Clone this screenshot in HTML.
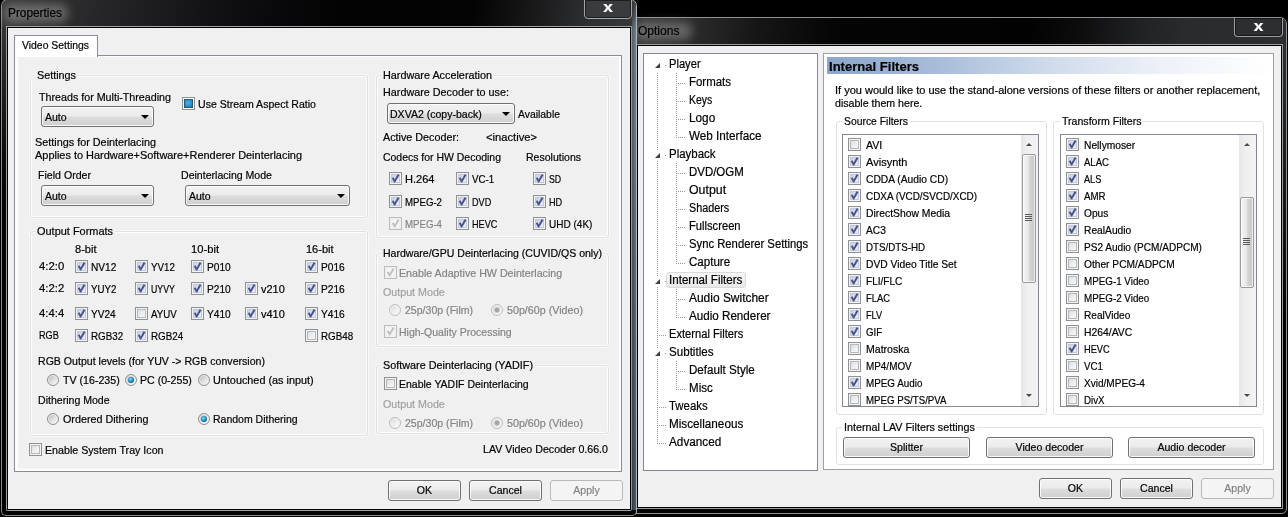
<!DOCTYPE html>
<html lang="en"><head><meta charset="utf-8"><title>Properties / Options</title>
<style>
html,body{margin:0;padding:0;background:#000;}
body{width:1288px;height:517px;overflow:hidden;font-family:"Liberation Sans",sans-serif;}
#root{position:relative;width:1288px;height:517px;overflow:hidden;background:#000;}
#root div{position:absolute;box-sizing:content-box;}
.t{font-size:11px;line-height:13px;white-space:pre;color:#000;transform-origin:0 50%;-webkit-text-stroke:0.2px currentColor;}
.bt{text-align:center;transform-origin:50% 50%;}
.gray{color:#838383;}
/* window frames */
.win{border-radius:7px 7px 2px 2px;}
.client{background:#f0f0f0;}
/* group box */
.grp{border:1px solid #dfe1e3;border-radius:3px;box-shadow:inset 0 0 0 1px rgba(255,255,255,.85), 0 0 0 1px rgba(255,255,255,.55);}
.glbg{}
/* button + combobox */
.btn{box-sizing:border-box !important;border:1px solid #707070;border-radius:3px;
 background:linear-gradient(#f2f2f2 0%,#ebebeb 48%,#dddddd 52%,#cfcfcf 100%);
 box-shadow:inset 0 0 0 1px rgba(255,255,255,.85);}
.btn.dis{border-color:#b6babd;background:#f4f4f4;box-shadow:none;}
.arr{width:0;height:0;border-left:4px solid transparent;border-right:4px solid transparent;border-top:4px solid #000;}
/* checkbox */
.cb{width:11px;height:11px;border:1px solid #909191;background:linear-gradient(135deg,#d0d4d9 0%,#eef0f2 55%,#fafbfb 100%);box-shadow:inset 0 0 0 1px #f4f4f4, inset 0 0 0 2px #b4b8bd;}
.cb.on{background:linear-gradient(135deg,#bfc5da 0%,#dde1f0 50%,#f3f4fb 100%);box-shadow:inset 0 0 0 1px #f1f2f6, inset 0 0 0 2px #c3c8da;}
.cb.dis{border-color:#bcbcbc;background:#f6f6f6;box-shadow:inset 0 0 0 2px #f0f0f0;}
.cb svg{position:absolute;left:-1px;top:-1px;}
.cb.sq{background:#fff;box-shadow:none;}
/* radio */
.rb{width:10px;height:10px;border:1px solid #8e8f8f;border-radius:50%;background:linear-gradient(135deg,#bcbfc3 15%,#e0e2e4 55%,#f8f8f8 90%);box-shadow:inset 0 0 0 1px #f1f1f1;}
.rb.on::after{content:"";position:absolute;left:2px;top:2px;width:6px;height:6px;border-radius:50%;background:radial-gradient(circle at 42% 38%,#86e2fb 0%,#2da3d3 35%,#185680 72%,#123e5e 100%);}
.rb.dis{border-color:#bdbdbd;background:linear-gradient(135deg,#dedede 15%,#efefef 55%,#f8f8f8 90%);box-shadow:inset 0 0 0 1px #f3f3f3;}
.rb.dis.on::after{left:3px;top:3px;width:4px;height:4px;background:#a2a2a2;box-shadow:0 0 0 1px #c6c6c6;}

</style></head>
<body>
<div id="root">
<div style="left:628px;top:17px;width:657px;height:495px;background:linear-gradient(180deg,#2e2f31 0px,#2e2f31 30px,#222324 100px,#0c0c0d 240px,#030303 300px);border:1px solid #8e9092;border-radius:7px 7px 5px 5px;"></div>
<div style="left:637px;top:18px;width:649px;height:26px;background:linear-gradient(95deg,#3a3a3b 0px,#2a2a2b 60px,#161617 120px,#050506 200px,#020202 390px,#0c0c0d 440px,#202123 500px,#2a2b2d 550px,#2d2e30 650px);border-radius:0 6px 0 0;"></div>
<div style="left:636px;top:22px;width:56px;height:18px;background:rgba(255,255,255,.26);filter:blur(5px);border-radius:8px;"></div>
<div style="left:1234px;top:18px;width:47px;height:18px;border:1px solid #9c9ea0;border-top:none;border-radius:0 0 4px 4px;background:#2d2e30;box-shadow:inset 0 0 0 1px #151516;"></div>
<div class="t" style="left:1234px;top:17px;width:49px;text-align:center;color:#fff;font-weight:bold;font-size:15px;line-height:17px;transform:scaleX(1.15);transform-origin:50% 50%;">x</div>
<div class="t" style="left:638px;top:24.0px;font-size:12px;line-height:14px;color:#000;transform:scaleX(1.0010);">Options</div>
<div style="left:636px;top:44px;width:645px;height:463px;border:1px solid #9a9b9d;background:#000;"></div>
<div class="client" style="left:638px;top:46px;width:643px;height:461px;"></div>
<div style="left:643px;top:53px;width:173px;height:416px;background:#fff;border:1px solid #828790;"></div>
<div style="left:657px;top:73px;width:1px;height:371px;background:repeating-linear-gradient(180deg,#9a9a9a 0,#9a9a9a 1px,transparent 1px,transparent 2px);"></div>
<div style="left:654px;top:61px;width:8px;height:9px;background:#fff;"></div>
<div style="left:655px;top:63px;width:0;height:0;border-left:5px solid transparent;border-bottom:5px solid #404040;"></div>
<div style="left:665px;top:65px;width:2px;height:1px;background:repeating-linear-gradient(90deg,#9a9a9a 0,#9a9a9a 1px,transparent 1px,transparent 2px);"></div>
<div class="t" style="left:669.4px;top:57.0px;font-size:12px;line-height:14px;transform:scaleX(0.9290);">Player</div>
<div style="left:676px;top:83px;width:10px;height:1px;background:repeating-linear-gradient(90deg,#9a9a9a 0,#9a9a9a 1px,transparent 1px,transparent 2px);"></div>
<div class="t" style="left:688.7px;top:75.0px;font-size:12px;line-height:14px;transform:scaleX(0.9542);">Formats</div>
<div style="left:676px;top:101px;width:10px;height:1px;background:repeating-linear-gradient(90deg,#9a9a9a 0,#9a9a9a 1px,transparent 1px,transparent 2px);"></div>
<div class="t" style="left:688.7px;top:93.0px;font-size:12px;line-height:14px;transform:scaleX(0.8693);">Keys</div>
<div style="left:676px;top:119px;width:10px;height:1px;background:repeating-linear-gradient(90deg,#9a9a9a 0,#9a9a9a 1px,transparent 1px,transparent 2px);"></div>
<div class="t" style="left:688.7px;top:111.0px;font-size:12px;line-height:14px;transform:scaleX(0.9812);">Logo</div>
<div style="left:676px;top:137px;width:10px;height:1px;background:repeating-linear-gradient(90deg,#9a9a9a 0,#9a9a9a 1px,transparent 1px,transparent 2px);"></div>
<div class="t" style="left:688.7px;top:129.0px;font-size:12px;line-height:14px;transform:scaleX(0.9747);">Web Interface</div>
<div style="left:654px;top:151px;width:8px;height:9px;background:#fff;"></div>
<div style="left:655px;top:153px;width:0;height:0;border-left:5px solid transparent;border-bottom:5px solid #404040;"></div>
<div style="left:665px;top:155px;width:2px;height:1px;background:repeating-linear-gradient(90deg,#9a9a9a 0,#9a9a9a 1px,transparent 1px,transparent 2px);"></div>
<div class="t" style="left:669.4px;top:147.0px;font-size:12px;line-height:14px;transform:scaleX(0.9548);">Playback</div>
<div style="left:676px;top:173px;width:10px;height:1px;background:repeating-linear-gradient(90deg,#9a9a9a 0,#9a9a9a 1px,transparent 1px,transparent 2px);"></div>
<div class="t" style="left:688.7px;top:165.0px;font-size:12px;line-height:14px;transform:scaleX(0.9539);">DVD/OGM</div>
<div style="left:676px;top:191px;width:10px;height:1px;background:repeating-linear-gradient(90deg,#9a9a9a 0,#9a9a9a 1px,transparent 1px,transparent 2px);"></div>
<div class="t" style="left:688.7px;top:183.0px;font-size:12px;line-height:14px;transform:scaleX(1.0297);">Output</div>
<div style="left:676px;top:209px;width:10px;height:1px;background:repeating-linear-gradient(90deg,#9a9a9a 0,#9a9a9a 1px,transparent 1px,transparent 2px);"></div>
<div class="t" style="left:688.7px;top:201.0px;font-size:12px;line-height:14px;transform:scaleX(0.8993);">Shaders</div>
<div style="left:676px;top:227px;width:10px;height:1px;background:repeating-linear-gradient(90deg,#9a9a9a 0,#9a9a9a 1px,transparent 1px,transparent 2px);"></div>
<div class="t" style="left:688.7px;top:219.0px;font-size:12px;line-height:14px;transform:scaleX(0.9321);">Fullscreen</div>
<div style="left:676px;top:245px;width:10px;height:1px;background:repeating-linear-gradient(90deg,#9a9a9a 0,#9a9a9a 1px,transparent 1px,transparent 2px);"></div>
<div class="t" style="left:688.7px;top:237.0px;font-size:12px;line-height:14px;transform:scaleX(0.9398);">Sync Renderer Settings</div>
<div style="left:676px;top:263px;width:10px;height:1px;background:repeating-linear-gradient(90deg,#9a9a9a 0,#9a9a9a 1px,transparent 1px,transparent 2px);"></div>
<div class="t" style="left:688.7px;top:255.0px;font-size:12px;line-height:14px;transform:scaleX(0.9625);">Capture</div>
<div style="left:666px;top:272px;width:78px;height:14px;background:linear-gradient(#f8f8f8,#e8e8e8);border:1px solid #d9d9d9;border-radius:3px;"></div>
<div style="left:654px;top:277px;width:8px;height:9px;background:#fff;"></div>
<div style="left:655px;top:279px;width:0;height:0;border-left:5px solid transparent;border-bottom:5px solid #404040;"></div>
<div style="left:665px;top:281px;width:2px;height:1px;background:repeating-linear-gradient(90deg,#9a9a9a 0,#9a9a9a 1px,transparent 1px,transparent 2px);"></div>
<div class="t" style="left:669.4px;top:273.0px;font-size:12px;line-height:14px;transform:scaleX(0.9654);">Internal Filters</div>
<div style="left:676px;top:299px;width:10px;height:1px;background:repeating-linear-gradient(90deg,#9a9a9a 0,#9a9a9a 1px,transparent 1px,transparent 2px);"></div>
<div class="t" style="left:688.7px;top:291.0px;font-size:12px;line-height:14px;transform:scaleX(0.9957);">Audio Switcher</div>
<div style="left:676px;top:317px;width:10px;height:1px;background:repeating-linear-gradient(90deg,#9a9a9a 0,#9a9a9a 1px,transparent 1px,transparent 2px);"></div>
<div class="t" style="left:688.7px;top:309.0px;font-size:12px;line-height:14px;transform:scaleX(0.9695);">Audio Renderer</div>
<div style="left:657px;top:335px;width:10px;height:1px;background:repeating-linear-gradient(90deg,#9a9a9a 0,#9a9a9a 1px,transparent 1px,transparent 2px);"></div>
<div class="t" style="left:669.4px;top:327.0px;font-size:12px;line-height:14px;transform:scaleX(0.9284);">External Filters</div>
<div style="left:654px;top:349px;width:8px;height:9px;background:#fff;"></div>
<div style="left:655px;top:351px;width:0;height:0;border-left:5px solid transparent;border-bottom:5px solid #404040;"></div>
<div style="left:665px;top:353px;width:2px;height:1px;background:repeating-linear-gradient(90deg,#9a9a9a 0,#9a9a9a 1px,transparent 1px,transparent 2px);"></div>
<div class="t" style="left:669.4px;top:345.0px;font-size:12px;line-height:14px;transform:scaleX(0.9667);">Subtitles</div>
<div style="left:676px;top:371px;width:10px;height:1px;background:repeating-linear-gradient(90deg,#9a9a9a 0,#9a9a9a 1px,transparent 1px,transparent 2px);"></div>
<div class="t" style="left:688.7px;top:363.0px;font-size:12px;line-height:14px;transform:scaleX(0.9655);">Default Style</div>
<div style="left:676px;top:389px;width:10px;height:1px;background:repeating-linear-gradient(90deg,#9a9a9a 0,#9a9a9a 1px,transparent 1px,transparent 2px);"></div>
<div class="t" style="left:688.7px;top:381.0px;font-size:12px;line-height:14px;transform:scaleX(0.9647);">Misc</div>
<div style="left:657px;top:407px;width:10px;height:1px;background:repeating-linear-gradient(90deg,#9a9a9a 0,#9a9a9a 1px,transparent 1px,transparent 2px);"></div>
<div class="t" style="left:669.4px;top:399.0px;font-size:12px;line-height:14px;transform:scaleX(0.9487);">Tweaks</div>
<div style="left:657px;top:425px;width:10px;height:1px;background:repeating-linear-gradient(90deg,#9a9a9a 0,#9a9a9a 1px,transparent 1px,transparent 2px);"></div>
<div class="t" style="left:669.4px;top:417.0px;font-size:12px;line-height:14px;transform:scaleX(0.9770);">Miscellaneous</div>
<div style="left:657px;top:443px;width:10px;height:1px;background:repeating-linear-gradient(90deg,#9a9a9a 0,#9a9a9a 1px,transparent 1px,transparent 2px);"></div>
<div class="t" style="left:669.4px;top:435.0px;font-size:12px;line-height:14px;transform:scaleX(0.9799);">Advanced</div>
<div style="left:676px;top:73px;width:1px;height:65px;background:repeating-linear-gradient(180deg,#9a9a9a 0,#9a9a9a 1px,transparent 1px,transparent 2px);"></div>
<div style="left:676px;top:163px;width:1px;height:101px;background:repeating-linear-gradient(180deg,#9a9a9a 0,#9a9a9a 1px,transparent 1px,transparent 2px);"></div>
<div style="left:676px;top:289px;width:1px;height:29px;background:repeating-linear-gradient(180deg,#9a9a9a 0,#9a9a9a 1px,transparent 1px,transparent 2px);"></div>
<div style="left:676px;top:361px;width:1px;height:29px;background:repeating-linear-gradient(180deg,#9a9a9a 0,#9a9a9a 1px,transparent 1px,transparent 2px);"></div>
<div style="left:823px;top:53px;width:449px;height:415px;background:#fff;border:1px solid #a0a0a0;"></div>
<div style="left:827px;top:57px;width:445px;height:17px;background:linear-gradient(90deg,#8aa6ca 0%,#a8bdda 25%,#cfdbeb 50%,#edf1f8 75%,#fff 100%);"></div>
<div class="t" style="left:829px;top:58.5px;font-size:13px;line-height:15px;font-weight:bold;transform:scaleX(1.0047);">Internal Filters</div>
<div class="t" style="left:834.7px;top:83.5px;transform:scaleX(0.9993);">If you would like to use the stand-alone versions of these filters or another replacement,</div>
<div class="t" style="left:834.7px;top:96.5px;transform:scaleX(0.9646);">disable them here.</div>
<div class="grp" style="left:836px;top:121px;width:209px;height:292px"></div>
<div class="glbg" style="left:842px;top:115px;width:68px;height:13px;background:#fff"></div>
<div class="t gl" style="left:844px;top:114.5px;transform:scaleX(0.9431);">Source Filters</div>
<div class="grp" style="left:1053px;top:121px;width:209px;height:292px"></div>
<div class="glbg" style="left:1059.5px;top:115px;width:83.5px;height:13px;background:#fff"></div>
<div class="t gl" style="left:1061.5px;top:114.5px;transform:scaleX(0.9611);">Transform Filters</div>
<div class="grp" style="left:836px;top:427px;width:426px;height:36px"></div>
<div class="glbg" style="left:842px;top:421px;width:135px;height:13px;background:#fff"></div>
<div class="t gl" style="left:844px;top:420.5px;transform:scaleX(0.9799);">Internal LAV Filters settings</div>
<div style="left:842px;top:134px;width:195px;height:271px;background:#fff;border:1px solid #828790;overflow:hidden;">
<div class="cb" style="left:5px;top:3px"></div>
<div class="t" style="left:22.7px;top:4.0px;transform:scaleX(0.9633);">AVI</div>
<div class="cb on" style="left:5px;top:20px"><svg width="13" height="13" viewBox="0 0 13 13"><path d="M2.8 6.3 L4.5 5.3 L5.7 7.4 L8.5 2.2 L10.5 2.9 L6.1 10.5 L5.1 10.5 Z" fill="#47548a"/></svg></div>
<div class="t" style="left:22.7px;top:21.0px;transform:scaleX(1.0030);">Avisynth</div>
<div class="cb on" style="left:5px;top:37px"><svg width="13" height="13" viewBox="0 0 13 13"><path d="M2.8 6.3 L4.5 5.3 L5.7 7.4 L8.5 2.2 L10.5 2.9 L6.1 10.5 L5.1 10.5 Z" fill="#47548a"/></svg></div>
<div class="t" style="left:22.7px;top:38.0px;transform:scaleX(0.9326);">CDDA (Audio CD)</div>
<div class="cb on" style="left:5px;top:54px"><svg width="13" height="13" viewBox="0 0 13 13"><path d="M2.8 6.3 L4.5 5.3 L5.7 7.4 L8.5 2.2 L10.5 2.9 L6.1 10.5 L5.1 10.5 Z" fill="#47548a"/></svg></div>
<div class="t" style="left:22.7px;top:55.0px;transform:scaleX(0.8990);">CDXA (VCD/SVCD/XCD)</div>
<div class="cb on" style="left:5px;top:71px"><svg width="13" height="13" viewBox="0 0 13 13"><path d="M2.8 6.3 L4.5 5.3 L5.7 7.4 L8.5 2.2 L10.5 2.9 L6.1 10.5 L5.1 10.5 Z" fill="#47548a"/></svg></div>
<div class="t" style="left:22.7px;top:72.0px;transform:scaleX(0.9410);">DirectShow Media</div>
<div class="cb on" style="left:5px;top:88px"><svg width="13" height="13" viewBox="0 0 13 13"><path d="M2.8 6.3 L4.5 5.3 L5.7 7.4 L8.5 2.2 L10.5 2.9 L6.1 10.5 L5.1 10.5 Z" fill="#47548a"/></svg></div>
<div class="t" style="left:22.7px;top:89.0px;transform:scaleX(0.9250);">AC3</div>
<div class="cb on" style="left:5px;top:105px"><svg width="13" height="13" viewBox="0 0 13 13"><path d="M2.8 6.3 L4.5 5.3 L5.7 7.4 L8.5 2.2 L10.5 2.9 L6.1 10.5 L5.1 10.5 Z" fill="#47548a"/></svg></div>
<div class="t" style="left:22.7px;top:106.0px;transform:scaleX(0.8873);">DTS/DTS-HD</div>
<div class="cb on" style="left:5px;top:122px"><svg width="13" height="13" viewBox="0 0 13 13"><path d="M2.8 6.3 L4.5 5.3 L5.7 7.4 L8.5 2.2 L10.5 2.9 L6.1 10.5 L5.1 10.5 Z" fill="#47548a"/></svg></div>
<div class="t" style="left:22.7px;top:123.0px;transform:scaleX(0.9349);">DVD Video Title Set</div>
<div class="cb on" style="left:5px;top:139px"><svg width="13" height="13" viewBox="0 0 13 13"><path d="M2.8 6.3 L4.5 5.3 L5.7 7.4 L8.5 2.2 L10.5 2.9 L6.1 10.5 L5.1 10.5 Z" fill="#47548a"/></svg></div>
<div class="t" style="left:22.7px;top:140.0px;transform:scaleX(0.9161);">FLI/FLC</div>
<div class="cb on" style="left:5px;top:156px"><svg width="13" height="13" viewBox="0 0 13 13"><path d="M2.8 6.3 L4.5 5.3 L5.7 7.4 L8.5 2.2 L10.5 2.9 L6.1 10.5 L5.1 10.5 Z" fill="#47548a"/></svg></div>
<div class="t" style="left:22.7px;top:157.0px;transform:scaleX(0.8604);">FLAC</div>
<div class="cb on" style="left:5px;top:173px"><svg width="13" height="13" viewBox="0 0 13 13"><path d="M2.8 6.3 L4.5 5.3 L5.7 7.4 L8.5 2.2 L10.5 2.9 L6.1 10.5 L5.1 10.5 Z" fill="#47548a"/></svg></div>
<div class="t" style="left:22.7px;top:174.0px;transform:scaleX(0.8316);">FLV</div>
<div class="cb on" style="left:5px;top:190px"><svg width="13" height="13" viewBox="0 0 13 13"><path d="M2.8 6.3 L4.5 5.3 L5.7 7.4 L8.5 2.2 L10.5 2.9 L6.1 10.5 L5.1 10.5 Z" fill="#47548a"/></svg></div>
<div class="t" style="left:22.7px;top:191.0px;transform:scaleX(0.8777);">GIF</div>
<div class="cb" style="left:5px;top:207px"></div>
<div class="t" style="left:22.7px;top:208.0px;transform:scaleX(0.9591);">Matroska</div>
<div class="cb" style="left:5px;top:224px"></div>
<div class="t" style="left:22.7px;top:225.0px;transform:scaleX(0.9008);">MP4/MOV</div>
<div class="cb on" style="left:5px;top:241px"><svg width="13" height="13" viewBox="0 0 13 13"><path d="M2.8 6.3 L4.5 5.3 L5.7 7.4 L8.5 2.2 L10.5 2.9 L6.1 10.5 L5.1 10.5 Z" fill="#47548a"/></svg></div>
<div class="t" style="left:22.7px;top:242.0px;transform:scaleX(0.8955);">MPEG Audio</div>
<div class="cb" style="left:5px;top:258px"></div>
<div class="t" style="left:22.7px;top:259.0px;transform:scaleX(0.8798);">MPEG PS/TS/PVA</div>
</div>
<div style="left:1021px;top:135px;width:17px;height:271px;background:linear-gradient(90deg,#e6e6e6,#f0f0f0 40%,#f3f3f3);"></div>
<div style="left:1026px;top:143px;width:0;height:0;border-left:3.5px solid transparent;border-right:3.5px solid transparent;border-bottom:3.5px solid #4a4a4a;"></div>
<div style="left:1026px;top:394px;width:0;height:0;border-left:3.5px solid transparent;border-right:3.5px solid transparent;border-top:3.5px solid #4a4a4a;"></div>
<div style="left:1022px;top:154px;width:12px;height:127px;border:1px solid #9a9a9a;border-radius:2px;background:linear-gradient(90deg,#f5f5f5 0%,#e8e8e8 45%,#d6d6d6 55%,#c6c6c6 100%);box-shadow:inset 0 0 0 1px rgba(255,255,255,.7);"></div>
<div style="left:1025px;top:214px;width:7px;height:1px;background:#5a5a5a;"></div>
<div style="left:1025px;top:216px;width:7px;height:1px;background:#5a5a5a;"></div>
<div style="left:1025px;top:218px;width:7px;height:1px;background:#5a5a5a;"></div>
<div style="left:1025px;top:220px;width:7px;height:1px;background:#5a5a5a;"></div>
<div style="left:1060px;top:134px;width:195px;height:271px;background:#fff;border:1px solid #828790;overflow:hidden;">
<div class="cb on" style="left:5px;top:3px"><svg width="13" height="13" viewBox="0 0 13 13"><path d="M2.8 6.3 L4.5 5.3 L5.7 7.4 L8.5 2.2 L10.5 2.9 L6.1 10.5 L5.1 10.5 Z" fill="#47548a"/></svg></div>
<div class="t" style="left:22.7px;top:4.0px;transform:scaleX(0.9306);">Nellymoser</div>
<div class="cb on" style="left:5px;top:20px"><svg width="13" height="13" viewBox="0 0 13 13"><path d="M2.8 6.3 L4.5 5.3 L5.7 7.4 L8.5 2.2 L10.5 2.9 L6.1 10.5 L5.1 10.5 Z" fill="#47548a"/></svg></div>
<div class="t" style="left:22.7px;top:21.0px;transform:scaleX(0.8661);">ALAC</div>
<div class="cb on" style="left:5px;top:37px"><svg width="13" height="13" viewBox="0 0 13 13"><path d="M2.8 6.3 L4.5 5.3 L5.7 7.4 L8.5 2.2 L10.5 2.9 L6.1 10.5 L5.1 10.5 Z" fill="#47548a"/></svg></div>
<div class="t" style="left:22.7px;top:38.0px;transform:scaleX(0.8319);">ALS</div>
<div class="cb on" style="left:5px;top:54px"><svg width="13" height="13" viewBox="0 0 13 13"><path d="M2.8 6.3 L4.5 5.3 L5.7 7.4 L8.5 2.2 L10.5 2.9 L6.1 10.5 L5.1 10.5 Z" fill="#47548a"/></svg></div>
<div class="t" style="left:22.7px;top:55.0px;transform:scaleX(0.8833);">AMR</div>
<div class="cb on" style="left:5px;top:71px"><svg width="13" height="13" viewBox="0 0 13 13"><path d="M2.8 6.3 L4.5 5.3 L5.7 7.4 L8.5 2.2 L10.5 2.9 L6.1 10.5 L5.1 10.5 Z" fill="#47548a"/></svg></div>
<div class="t" style="left:22.7px;top:72.0px;transform:scaleX(0.9241);">Opus</div>
<div class="cb on" style="left:5px;top:88px"><svg width="13" height="13" viewBox="0 0 13 13"><path d="M2.8 6.3 L4.5 5.3 L5.7 7.4 L8.5 2.2 L10.5 2.9 L6.1 10.5 L5.1 10.5 Z" fill="#47548a"/></svg></div>
<div class="t" style="left:22.7px;top:89.0px;transform:scaleX(0.9317);">RealAudio</div>
<div class="cb" style="left:5px;top:105px"></div>
<div class="t" style="left:22.7px;top:106.0px;transform:scaleX(0.9141);">PS2 Audio (PCM/ADPCM)</div>
<div class="cb" style="left:5px;top:122px"></div>
<div class="t" style="left:22.7px;top:123.0px;transform:scaleX(0.9274);">Other PCM/ADPCM</div>
<div class="cb" style="left:5px;top:139px"></div>
<div class="t" style="left:22.7px;top:140.0px;transform:scaleX(0.8924);">MPEG-1 Video</div>
<div class="cb" style="left:5px;top:156px"></div>
<div class="t" style="left:22.7px;top:157.0px;transform:scaleX(0.8924);">MPEG-2 Video</div>
<div class="cb" style="left:5px;top:173px"></div>
<div class="t" style="left:22.7px;top:174.0px;transform:scaleX(0.9157);">RealVideo</div>
<div class="cb" style="left:5px;top:190px"></div>
<div class="t" style="left:22.7px;top:191.0px;transform:scaleX(0.9422);">H264/AVC</div>
<div class="cb on" style="left:5px;top:207px"><svg width="13" height="13" viewBox="0 0 13 13"><path d="M2.8 6.3 L4.5 5.3 L5.7 7.4 L8.5 2.2 L10.5 2.9 L6.1 10.5 L5.1 10.5 Z" fill="#47548a"/></svg></div>
<div class="t" style="left:22.7px;top:208.0px;transform:scaleX(0.8409);">HEVC</div>
<div class="cb" style="left:5px;top:224px"></div>
<div class="t" style="left:22.7px;top:225.0px;transform:scaleX(0.8829);">VC1</div>
<div class="cb" style="left:5px;top:241px"></div>
<div class="t" style="left:22.7px;top:242.0px;transform:scaleX(0.9139);">Xvid/MPEG-4</div>
<div class="cb" style="left:5px;top:258px"></div>
<div class="t" style="left:22.7px;top:259.0px;transform:scaleX(0.8866);">DivX</div>
</div>
<div style="left:1239px;top:135px;width:17px;height:271px;background:linear-gradient(90deg,#e6e6e6,#f0f0f0 40%,#f3f3f3);"></div>
<div style="left:1244px;top:143px;width:0;height:0;border-left:3.5px solid transparent;border-right:3.5px solid transparent;border-bottom:3.5px solid #4a4a4a;"></div>
<div style="left:1244px;top:394px;width:0;height:0;border-left:3.5px solid transparent;border-right:3.5px solid transparent;border-top:3.5px solid #4a4a4a;"></div>
<div style="left:1240px;top:197px;width:12px;height:89px;border:1px solid #9a9a9a;border-radius:2px;background:linear-gradient(90deg,#f5f5f5 0%,#e8e8e8 45%,#d6d6d6 55%,#c6c6c6 100%);box-shadow:inset 0 0 0 1px rgba(255,255,255,.7);"></div>
<div style="left:1243px;top:238px;width:7px;height:1px;background:#5a5a5a;"></div>
<div style="left:1243px;top:240px;width:7px;height:1px;background:#5a5a5a;"></div>
<div style="left:1243px;top:242px;width:7px;height:1px;background:#5a5a5a;"></div>
<div style="left:1243px;top:244px;width:7px;height:1px;background:#5a5a5a;"></div>
<div class="btn" style="left:843px;top:437px;width:127px;height:21px"></div>
<div class="t bt" style="left:843px;top:441.0px;width:127px;transform:scaleX(0.96);">Splitter</div>
<div class="btn" style="left:986px;top:437px;width:127px;height:21px"></div>
<div class="t bt" style="left:986px;top:441.0px;width:127px;transform:scaleX(0.96);">Video decoder</div>
<div class="btn" style="left:1128px;top:437px;width:127px;height:21px"></div>
<div class="t bt" style="left:1128px;top:441.0px;width:127px;transform:scaleX(0.96);">Audio decoder</div>
<div class="btn" style="left:1039px;top:478px;width:73px;height:21px"></div>
<div class="t bt" style="left:1039px;top:482.0px;width:73px;transform:scaleX(0.96);">OK</div>
<div class="btn" style="left:1120px;top:478px;width:73px;height:21px"></div>
<div class="t bt" style="left:1120px;top:482.0px;width:73px;transform:scaleX(0.96);">Cancel</div>
<div class="btn dis" style="left:1201px;top:478px;width:73px;height:21px"></div>
<div class="t bt" style="left:1201px;top:482.0px;width:73px;transform:scaleX(0.96);color:#838383;">Apply</div>
<div style="left:0px;top:-1px;width:637px;height:517px;background:#000;border-radius:8px 8px 6px 6px;"></div>
<div style="left:1px;top:-1px;width:634px;height:515px;background:linear-gradient(180deg,#38383a 0px,#343435 32px,#1f1f20 90px,#0c0c0d 150px,#040404 210px);border:1px solid #8a8b8c;border-right-color:#aab6be;border-radius:7px 7px 5px 5px;"></div>
<div style="left:2px;top:0px;width:634px;height:27px;background:linear-gradient(97deg,#3b3b3c 0px,#303031 50px,#262628 100px,#1b1b1d 160px,#111113 215px,#08080a 280px,#030304 340px,#040405 470px,#19191a 530px,#2b2c2e 575px,#393a3c 634px);border-radius:6px 6px 0 0;"></div>
<div style="left:4px;top:4px;width:64px;height:18px;background:rgba(255,255,255,.28);filter:blur(5px);border-radius:8px;"></div>
<div style="left:632px;top:3px;width:4px;height:507px;background:linear-gradient(90deg,rgba(0,0,0,.18),rgba(255,255,255,.10)),linear-gradient(180deg,#3a3b3d 0px,#42464a 10px,#65727b 26px,#62707a 120px,#4c5963 300px,#3d4954 507px);"></div>
<div style="left:584px;top:-1px;width:46px;height:18px;border:1px solid #a4a6a8;border-radius:0 0 4px 4px;background:#3a3b3d;box-shadow:inset 0 0 0 1px #1d1d1e;"></div>
<div class="t" style="left:584px;top:-2px;width:48px;text-align:center;color:#fff;font-weight:bold;font-size:15px;line-height:17px;transform:scaleX(1.15);transform-origin:50% 50%;">x</div>
<div class="t" style="left:8px;top:6.0px;font-size:12px;line-height:14px;transform:scaleX(0.9871);">Properties</div>
<div style="left:6px;top:26px;width:624px;height:483px;border:1px solid #a0a1a2;border-right-color:#8e9aa3;background:#000;border-radius:0 0 2px 2px;"></div>
<div class="client" style="left:8px;top:28px;width:622px;height:481px;"></div>
<div style="left:14px;top:55px;width:606px;height:415px;border:1px solid #898c95;background:#fff;"></div>
<div style="left:18px;top:57px;width:601px;height:412px;background:#f0f0f0;"></div>
<div style="left:14px;top:35px;width:82px;height:21px;border:1px solid #898c95;border-bottom:none;background:#fff;"></div>
<div class="t" style="left:22px;top:38.5px;transform:scaleX(0.9470);">Video Settings</div>
<div class="grp" style="left:30px;top:75px;width:336px;height:141px"></div>
<div class="glbg" style="left:35px;top:69px;width:43px;height:13px;background:#f0f0f0"></div>
<div class="t gl" style="left:37px;top:68.5px;transform:scaleX(0.9811);">Settings</div>
<div class="t" style="left:39px;top:90.5px;transform:scaleX(0.9725);">Threads for Multi-Threading</div>
<div class="btn" style="left:41px;top:106px;width:113px;height:21px"></div>
<div class="t" style="left:45.2px;top:110.5px;transform:scaleX(0.9540);">Auto</div>
<div class="arr" style="left:141px;top:115px"></div>
<div class="cb sq" style="left:182px;top:97px;"><div style="left:1px;top:1px;width:7px;height:7px;border:1px solid #1f5c80;background:radial-gradient(circle at 45% 40%,#45b4e2 0%,#2f93c4 55%,#226f9c 100%);"></div></div>
<div class="t" style="left:198px;top:97.5px;transform:scaleX(0.9602);">Use Stream Aspect Ratio</div>
<div class="t" style="left:35px;top:135.5px;transform:scaleX(0.9845);">Settings for Deinterlacing</div>
<div class="t" style="left:35px;top:148.5px;transform:scaleX(0.9947);">Applies to Hardware+Software+Renderer Deinterlacing</div>
<div class="t" style="left:38px;top:168.5px;transform:scaleX(0.9631);">Field Order</div>
<div class="t" style="left:181px;top:168.5px;transform:scaleX(0.9601);">Deinterlacing Mode</div>
<div class="btn" style="left:41px;top:185px;width:113px;height:21px"></div>
<div class="t" style="left:45.2px;top:189.5px;transform:scaleX(0.9540);">Auto</div>
<div class="arr" style="left:141px;top:194px"></div>
<div class="btn" style="left:185px;top:185px;width:165px;height:21px"></div>
<div class="t" style="left:189px;top:189.5px;transform:scaleX(0.9540);">Auto</div>
<div class="arr" style="left:337px;top:194px"></div>
<div class="grp" style="left:30px;top:231px;width:336px;height:203px"></div>
<div class="glbg" style="left:35px;top:225px;width:80px;height:13px;background:#f0f0f0"></div>
<div class="t gl" style="left:37px;top:224.5px;transform:scaleX(0.9945);">Output Formats</div>
<div class="t" style="left:75px;top:242.5px;transform:scaleX(1.0044);">8-bit</div>
<div class="t" style="left:191px;top:242.5px;transform:scaleX(1.0170);">10-bit</div>
<div class="t" style="left:305.5px;top:242.5px;transform:scaleX(0.9989);">16-bit</div>
<div class="t" style="left:39px;top:259.5px;transform:scaleX(1.0299);">4:2:0</div>
<div class="cb on" style="left:75px;top:260px"><svg width="13" height="13" viewBox="0 0 13 13"><path d="M2.8 6.3 L4.5 5.3 L5.7 7.4 L8.5 2.2 L10.5 2.9 L6.1 10.5 L5.1 10.5 Z" fill="#47548a"/></svg></div>
<div class="t" style="left:90.5px;top:260.5px;transform:scaleX(0.9226);">NV12</div>
<div class="cb on" style="left:135px;top:260px"><svg width="13" height="13" viewBox="0 0 13 13"><path d="M2.8 6.3 L4.5 5.3 L5.7 7.4 L8.5 2.2 L10.5 2.9 L6.1 10.5 L5.1 10.5 Z" fill="#47548a"/></svg></div>
<div class="t" style="left:150.5px;top:260.5px;transform:scaleX(0.8840);">YV12</div>
<div class="cb on" style="left:191px;top:260px"><svg width="13" height="13" viewBox="0 0 13 13"><path d="M2.8 6.3 L4.5 5.3 L5.7 7.4 L8.5 2.2 L10.5 2.9 L6.1 10.5 L5.1 10.5 Z" fill="#47548a"/></svg></div>
<div class="t" style="left:206.5px;top:260.5px;transform:scaleX(0.9260);">P010</div>
<div class="cb on" style="left:305px;top:260px"><svg width="13" height="13" viewBox="0 0 13 13"><path d="M2.8 6.3 L4.5 5.3 L5.7 7.4 L8.5 2.2 L10.5 2.9 L6.1 10.5 L5.1 10.5 Z" fill="#47548a"/></svg></div>
<div class="t" style="left:320.5px;top:260.5px;transform:scaleX(0.9260);">P016</div>
<div class="t" style="left:39px;top:281.5px;transform:scaleX(1.0299);">4:2:2</div>
<div class="cb on" style="left:75px;top:282px"><svg width="13" height="13" viewBox="0 0 13 13"><path d="M2.8 6.3 L4.5 5.3 L5.7 7.4 L8.5 2.2 L10.5 2.9 L6.1 10.5 L5.1 10.5 Z" fill="#47548a"/></svg></div>
<div class="t" style="left:90.5px;top:282.5px;transform:scaleX(0.8835);">YUY2</div>
<div class="cb on" style="left:135px;top:282px"><svg width="13" height="13" viewBox="0 0 13 13"><path d="M2.8 6.3 L4.5 5.3 L5.7 7.4 L8.5 2.2 L10.5 2.9 L6.1 10.5 L5.1 10.5 Z" fill="#47548a"/></svg></div>
<div class="t" style="left:150.5px;top:282.5px;transform:scaleX(0.7942);">UYVY</div>
<div class="cb on" style="left:191px;top:282px"><svg width="13" height="13" viewBox="0 0 13 13"><path d="M2.8 6.3 L4.5 5.3 L5.7 7.4 L8.5 2.2 L10.5 2.9 L6.1 10.5 L5.1 10.5 Z" fill="#47548a"/></svg></div>
<div class="t" style="left:206.5px;top:282.5px;transform:scaleX(0.9260);">P210</div>
<div class="cb on" style="left:245px;top:282px"><svg width="13" height="13" viewBox="0 0 13 13"><path d="M2.8 6.3 L4.5 5.3 L5.7 7.4 L8.5 2.2 L10.5 2.9 L6.1 10.5 L5.1 10.5 Z" fill="#47548a"/></svg></div>
<div class="t" style="left:260.5px;top:282.5px;transform:scaleX(0.9975);">v210</div>
<div class="cb on" style="left:305px;top:282px"><svg width="13" height="13" viewBox="0 0 13 13"><path d="M2.8 6.3 L4.5 5.3 L5.7 7.4 L8.5 2.2 L10.5 2.9 L6.1 10.5 L5.1 10.5 Z" fill="#47548a"/></svg></div>
<div class="t" style="left:320.5px;top:282.5px;transform:scaleX(0.9260);">P216</div>
<div class="t" style="left:39px;top:306.5px;transform:scaleX(1.0299);">4:4:4</div>
<div class="cb on" style="left:75px;top:307px"><svg width="13" height="13" viewBox="0 0 13 13"><path d="M2.8 6.3 L4.5 5.3 L5.7 7.4 L8.5 2.2 L10.5 2.9 L6.1 10.5 L5.1 10.5 Z" fill="#47548a"/></svg></div>
<div class="t" style="left:90.5px;top:307.5px;transform:scaleX(0.9138);">YV24</div>
<div class="cb" style="left:135px;top:307px"></div>
<div class="t" style="left:150.5px;top:307.5px;transform:scaleX(0.8819);">AYUV</div>
<div class="cb on" style="left:191px;top:307px"><svg width="13" height="13" viewBox="0 0 13 13"><path d="M2.8 6.3 L4.5 5.3 L5.7 7.4 L8.5 2.2 L10.5 2.9 L6.1 10.5 L5.1 10.5 Z" fill="#47548a"/></svg></div>
<div class="t" style="left:206.5px;top:307.5px;transform:scaleX(0.9260);">Y410</div>
<div class="cb on" style="left:245px;top:307px"><svg width="13" height="13" viewBox="0 0 13 13"><path d="M2.8 6.3 L4.5 5.3 L5.7 7.4 L8.5 2.2 L10.5 2.9 L6.1 10.5 L5.1 10.5 Z" fill="#47548a"/></svg></div>
<div class="t" style="left:260.5px;top:307.5px;transform:scaleX(0.9975);">v410</div>
<div class="cb on" style="left:305px;top:307px"><svg width="13" height="13" viewBox="0 0 13 13"><path d="M2.8 6.3 L4.5 5.3 L5.7 7.4 L8.5 2.2 L10.5 2.9 L6.1 10.5 L5.1 10.5 Z" fill="#47548a"/></svg></div>
<div class="t" style="left:320.5px;top:307.5px;transform:scaleX(0.9260);">Y416</div>
<div class="t" style="left:38.5px;top:328.5px;transform:scaleX(0.8304);">RGB</div>
<div class="cb on" style="left:75px;top:329px"><svg width="13" height="13" viewBox="0 0 13 13"><path d="M2.8 6.3 L4.5 5.3 L5.7 7.4 L8.5 2.2 L10.5 2.9 L6.1 10.5 L5.1 10.5 Z" fill="#47548a"/></svg></div>
<div class="t" style="left:90.5px;top:329.5px;transform:scaleX(0.8897);">RGB32</div>
<div class="cb on" style="left:135px;top:329px"><svg width="13" height="13" viewBox="0 0 13 13"><path d="M2.8 6.3 L4.5 5.3 L5.7 7.4 L8.5 2.2 L10.5 2.9 L6.1 10.5 L5.1 10.5 Z" fill="#47548a"/></svg></div>
<div class="t" style="left:150.5px;top:329.5px;transform:scaleX(0.8897);">RGB24</div>
<div class="cb" style="left:305px;top:329px"></div>
<div class="t" style="left:320.5px;top:329.5px;transform:scaleX(0.8897);">RGB48</div>
<div class="t" style="left:38px;top:354.5px;transform:scaleX(0.9615);">RGB Output levels (for YUV -&gt; RGB conversion)</div>
<div class="rb" style="left:47px;top:374px"></div>
<div class="t" style="left:62.5px;top:373.5px;transform:scaleX(0.9659);">TV (16-235)</div>
<div class="rb on" style="left:125px;top:374px"></div>
<div class="t" style="left:140.2px;top:373.5px;transform:scaleX(0.9629);">PC (0-255)</div>
<div class="rb" style="left:198px;top:374px"></div>
<div class="t" style="left:213.4px;top:373.5px;transform:scaleX(0.9851);">Untouched (as input)</div>
<div class="t" style="left:38.4px;top:393.5px;transform:scaleX(0.9599);">Dithering Mode</div>
<div class="rb" style="left:47px;top:413px"></div>
<div class="t" style="left:62.5px;top:412.5px;transform:scaleX(0.9778);">Ordered Dithering</div>
<div class="rb on" style="left:198px;top:413px"></div>
<div class="t" style="left:213.4px;top:412.5px;transform:scaleX(0.9542);">Random Dithering</div>
<div class="cb" style="left:29px;top:443px"></div>
<div class="t" style="left:44.6px;top:443.5px;transform:scaleX(0.9691);">Enable System Tray Icon</div>
<div class="t" style="left:483px;top:442.5px;transform:scaleX(0.9671);">LAV Video Decoder 0.66.0</div>
<div class="grp" style="left:376px;top:75px;width:231px;height:161px"></div>
<div class="glbg" style="left:381px;top:69px;width:113px;height:13px;background:#f0f0f0"></div>
<div class="t gl" style="left:383px;top:68.5px;transform:scaleX(0.9849);">Hardware Acceleration</div>
<div class="t" style="left:383px;top:85.5px;transform:scaleX(0.9813);">Hardware Decoder to use:</div>
<div class="btn" style="left:387px;top:103px;width:128px;height:21px"></div>
<div class="t" style="left:390.4px;top:107.5px;transform:scaleX(0.9584);">DXVA2 (copy-back)</div>
<div class="arr" style="left:502px;top:112px"></div>
<div class="t" style="left:518px;top:107.5px;transform:scaleX(0.9448);">Available</div>
<div class="t" style="left:383px;top:130.5px;transform:scaleX(0.9787);">Active Decoder:</div>
<div class="t" style="left:486px;top:130.5px;transform:scaleX(1.0168);">&lt;inactive&gt;</div>
<div class="t" style="left:383px;top:150.5px;transform:scaleX(0.9508);">Codecs for HW Decoding</div>
<div class="t" style="left:526px;top:150.5px;transform:scaleX(0.9568);">Resolutions</div>
<div class="cb on" style="left:389px;top:172px"><svg width="13" height="13" viewBox="0 0 13 13"><path d="M2.8 6.3 L4.5 5.3 L5.7 7.4 L8.5 2.2 L10.5 2.9 L6.1 10.5 L5.1 10.5 Z" fill="#47548a"/></svg></div>
<div class="t" style="left:404.7px;top:172.5px;transform:scaleX(1.0048);">H.264</div>
<div class="cb on" style="left:456px;top:172px"><svg width="13" height="13" viewBox="0 0 13 13"><path d="M2.8 6.3 L4.5 5.3 L5.7 7.4 L8.5 2.2 L10.5 2.9 L6.1 10.5 L5.1 10.5 Z" fill="#47548a"/></svg></div>
<div class="t" style="left:471.7px;top:172.5px;transform:scaleX(0.8858);">VC-1</div>
<div class="cb on" style="left:533px;top:172px"><svg width="13" height="13" viewBox="0 0 13 13"><path d="M2.8 6.3 L4.5 5.3 L5.7 7.4 L8.5 2.2 L10.5 2.9 L6.1 10.5 L5.1 10.5 Z" fill="#47548a"/></svg></div>
<div class="t" style="left:548.7px;top:172.5px;transform:scaleX(0.7984);">SD</div>
<div class="cb on" style="left:389px;top:195px"><svg width="13" height="13" viewBox="0 0 13 13"><path d="M2.8 6.3 L4.5 5.3 L5.7 7.4 L8.5 2.2 L10.5 2.9 L6.1 10.5 L5.1 10.5 Z" fill="#47548a"/></svg></div>
<div class="t" style="left:404.7px;top:195.5px;transform:scaleX(0.8770);">MPEG-2</div>
<div class="cb on" style="left:456px;top:195px"><svg width="13" height="13" viewBox="0 0 13 13"><path d="M2.8 6.3 L4.5 5.3 L5.7 7.4 L8.5 2.2 L10.5 2.9 L6.1 10.5 L5.1 10.5 Z" fill="#47548a"/></svg></div>
<div class="t" style="left:471.7px;top:195.5px;transform:scaleX(0.8264);">DVD</div>
<div class="cb on" style="left:533px;top:195px"><svg width="13" height="13" viewBox="0 0 13 13"><path d="M2.8 6.3 L4.5 5.3 L5.7 7.4 L8.5 2.2 L10.5 2.9 L6.1 10.5 L5.1 10.5 Z" fill="#47548a"/></svg></div>
<div class="t" style="left:548.7px;top:195.5px;transform:scaleX(0.8307);">HD</div>
<div class="cb on dis" style="left:389px;top:217px"><svg width="13" height="13" viewBox="0 0 13 13"><path d="M2.8 6.3 L4.5 5.3 L5.7 7.4 L8.5 2.2 L10.5 2.9 L6.1 10.5 L5.1 10.5 Z" fill="#c0c0c0"/></svg></div>
<div class="t" style="left:404.7px;top:217.5px;color:#838383;transform:scaleX(0.8770);">MPEG-4</div>
<div class="cb on" style="left:456px;top:217px"><svg width="13" height="13" viewBox="0 0 13 13"><path d="M2.8 6.3 L4.5 5.3 L5.7 7.4 L8.5 2.2 L10.5 2.9 L6.1 10.5 L5.1 10.5 Z" fill="#47548a"/></svg></div>
<div class="t" style="left:471.7px;top:217.5px;transform:scaleX(0.8278);">HEVC</div>
<div class="cb on" style="left:533px;top:217px"><svg width="13" height="13" viewBox="0 0 13 13"><path d="M2.8 6.3 L4.5 5.3 L5.7 7.4 L8.5 2.2 L10.5 2.9 L6.1 10.5 L5.1 10.5 Z" fill="#47548a"/></svg></div>
<div class="t" style="left:548.7px;top:217.5px;transform:scaleX(0.9104);">UHD (4K)</div>
<div class="grp" style="left:376px;top:253px;width:231px;height:92px"></div>
<div class="glbg" style="left:381px;top:247px;width:223px;height:13px;background:#f0f0f0"></div>
<div class="t gl" style="left:383px;top:246.5px;transform:scaleX(0.9578);">Hardware/GPU Deinterlacing (CUVID/QS only)</div>
<div class="cb on dis" style="left:384px;top:266px"><svg width="13" height="13" viewBox="0 0 13 13"><path d="M2.8 6.3 L4.5 5.3 L5.7 7.4 L8.5 2.2 L10.5 2.9 L6.1 10.5 L5.1 10.5 Z" fill="#c0c0c0"/></svg></div>
<div class="t" style="left:399.4px;top:266.5px;color:#838383;transform:scaleX(0.9705);">Enable Adaptive HW Deinterlacing</div>
<div class="t" style="left:383.2px;top:285.5px;color:#a0a0a0;transform:scaleX(0.9718);">Output Mode</div>
<div class="rb dis" style="left:389px;top:304px"></div>
<div class="t" style="left:405.1px;top:303.5px;color:#838383;transform:scaleX(0.9602);">25p/30p (Film)</div>
<div class="rb on dis" style="left:491px;top:304px"></div>
<div class="t" style="left:507.2px;top:303.5px;color:#838383;transform:scaleX(0.9732);">50p/60p (Video)</div>
<div class="cb on dis" style="left:384px;top:325px"><svg width="13" height="13" viewBox="0 0 13 13"><path d="M2.8 6.3 L4.5 5.3 L5.7 7.4 L8.5 2.2 L10.5 2.9 L6.1 10.5 L5.1 10.5 Z" fill="#c0c0c0"/></svg></div>
<div class="t" style="left:399.4px;top:325.5px;color:#838383;transform:scaleX(0.9551);">High-Quality Processing</div>
<div class="grp" style="left:376px;top:365px;width:231px;height:67px"></div>
<div class="glbg" style="left:381px;top:359px;width:154px;height:13px;background:#f0f0f0"></div>
<div class="t gl" style="left:383px;top:358.5px;transform:scaleX(0.9828);">Software Deinterlacing (YADIF)</div>
<div class="cb" style="left:384px;top:377px"></div>
<div class="t" style="left:399.4px;top:377.5px;transform:scaleX(0.9540);">Enable YADIF Deinterlacing</div>
<div class="t" style="left:383.2px;top:397.5px;color:#a0a0a0;transform:scaleX(0.9718);">Output Mode</div>
<div class="rb dis" style="left:389px;top:417px"></div>
<div class="t" style="left:405.1px;top:416.5px;color:#838383;transform:scaleX(0.9602);">25p/30p (Film)</div>
<div class="rb on dis" style="left:491px;top:417px"></div>
<div class="t" style="left:507.2px;top:416.5px;color:#838383;transform:scaleX(0.9732);">50p/60p (Video)</div>
<div class="btn" style="left:388px;top:480px;width:73px;height:21px"></div>
<div class="t bt" style="left:388px;top:484.0px;width:73px;transform:scaleX(0.96);">OK</div>
<div class="btn" style="left:469px;top:480px;width:73px;height:21px"></div>
<div class="t bt" style="left:469px;top:484.0px;width:73px;transform:scaleX(0.96);">Cancel</div>
<div class="btn dis" style="left:550px;top:480px;width:73px;height:21px"></div>
<div class="t bt" style="left:550px;top:484.0px;width:73px;transform:scaleX(0.96);color:#838383;">Apply</div>
</div>
</body></html>
